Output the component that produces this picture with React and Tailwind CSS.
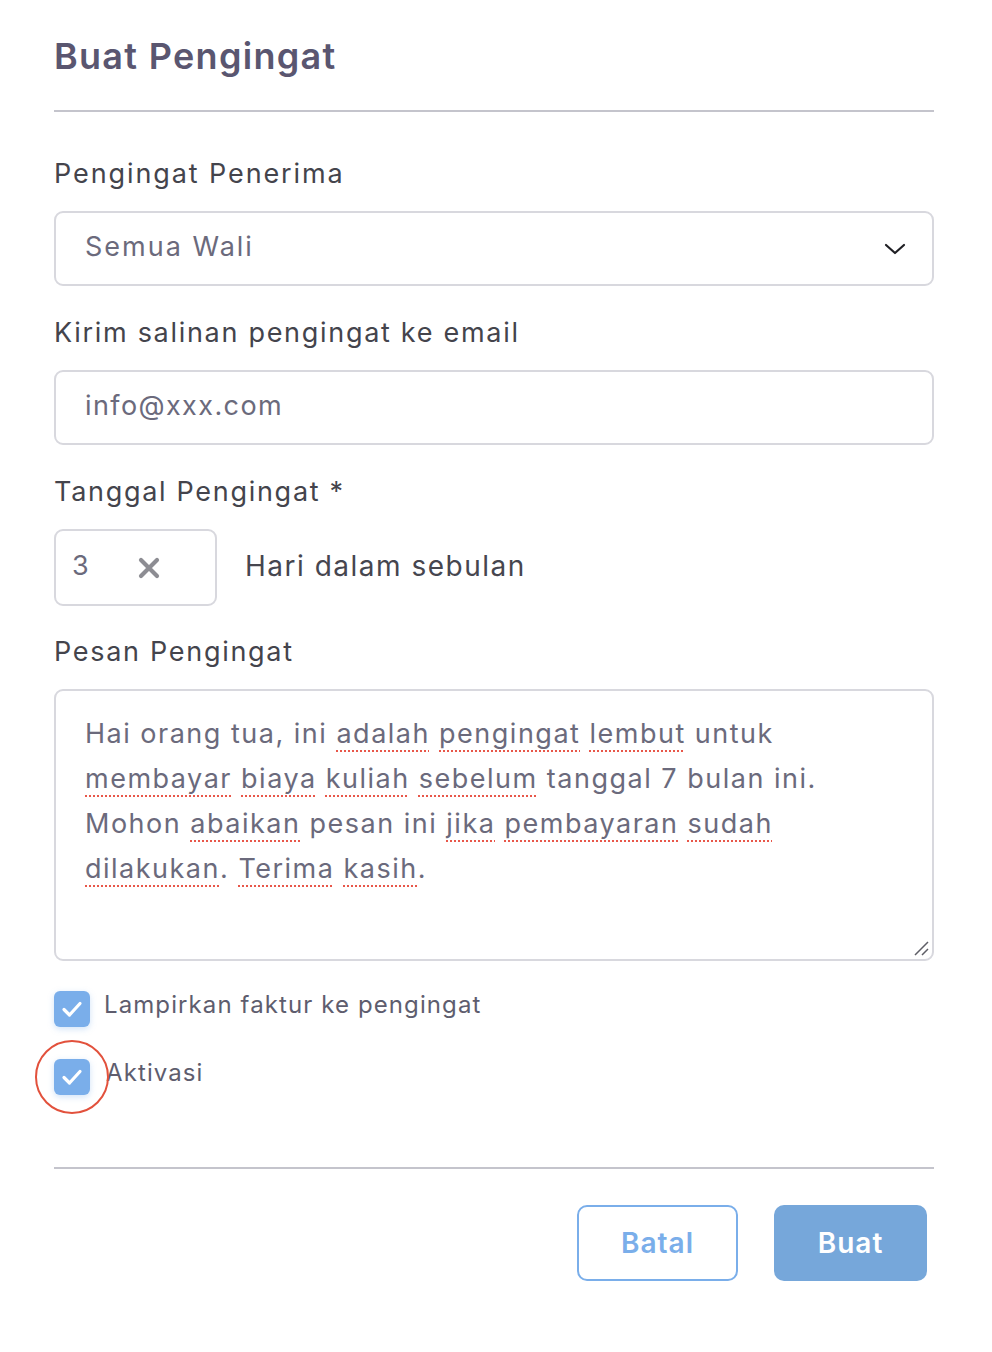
import React from "react";

const sp = "underline decoration-dotted decoration-[#e8574a] decoration-[2px] underline-offset-[7px]";

function Check() {
  return (
    <svg width="28" height="28" viewBox="0 0 28 28" fill="none" className="shrink-0">
      <path d="M6 14.5 L11.5 20 L22 8.5" stroke="white" strokeWidth="3.2" strokeLinecap="round" strokeLinejoin="round" />
    </svg>
  );
}

export default function App() {
  return (
    <div className="w-[992px] h-[1352px] bg-white font-['Inter',sans-serif] text-[#46464f]">
      <div className="px-[54px] pr-[58px]">
        <div className="pt-[30px] pb-[28px] text-[36px] font-semibold text-[#5a5670] tracking-[1.3px] leading-[52px]">
          Buat Pengingat
        </div>
        <div className="h-[2px] bg-[#c4c4cc]" />

        <div className="mt-[44px] text-[27px] tracking-[1.9px] leading-[36px] text-[#44444c]">Pengingat Penerima</div>
        <div className="mt-[19px] h-[75px] border-2 border-[#d8d8de] rounded-[9px] flex items-center justify-between pl-[29px] pr-[26px]">
          <span className="text-[27px] tracking-[2px] text-[#6b6a7c] -mt-[3px]">Semua Wali</span>
          <svg width="22" height="14" viewBox="0 0 22 14" fill="none">
            <path d="M2 3 L11 11 L20 3" stroke="#1f1f24" strokeWidth="2.2" strokeLinecap="round" strokeLinejoin="round" />
          </svg>
        </div>

        <div className="mt-[29px] text-[27px] tracking-[1.7px] leading-[36px] text-[#44444c]">Kirim salinan pengingat ke email</div>
        <div className="mt-[19px] h-[75px] border-2 border-[#d8d8de] rounded-[9px] flex items-center pl-[29px]">
          <span className="text-[27px] tracking-[1.4px] text-[#6b6a7c] -mt-[3px]">info@xxx.com</span>
        </div>

        <div className="mt-[29px] text-[27px] tracking-[1.7px] leading-[36px] text-[#44444c]">Tanggal Pengingat *</div>
        <div className="mt-[19px] flex items-center">
          <div className="w-[163px] h-[77px] border-2 border-[#d8d8de] rounded-[9px] flex items-center pl-[16px]">
            <span className="text-[27px] text-[#6b6a7c] w-[66px] -mt-[3px]">3</span>
            <svg width="22" height="22" viewBox="0 0 22 22" fill="none">
              <path d="M3 3 L19 19 M19 3 L3 19" stroke="#8d8d93" strokeWidth="4.2" strokeLinecap="round" />
            </svg>
          </div>
          <span className="ml-[28px] text-[28px] tracking-[1.5px] text-[#46464f] -mt-[3px]">Hari dalam sebulan</span>
        </div>

        <div className="mt-[28px] text-[27px] tracking-[1.7px] leading-[36px] text-[#44444c]">Pesan Pengingat</div>
        <div className="relative mt-[19px] h-[272px] border-2 border-[#d8d8de] rounded-[9px] pl-[29px] pr-[10px] pt-[20px]">
          <div className="text-[27px] tracking-[1.5px] leading-[45px] text-[#6b6a7c] whitespace-nowrap">
            Hai orang tua, ini <span className={sp}>adalah</span> <span className={sp}>pengingat</span> <span className={sp}>lembut</span> untuk
            <br />
            <span className={sp}>membayar</span> <span className={sp}>biaya</span> <span className={sp}>kuliah</span> <span className={sp}>sebelum</span> tanggal 7 bulan ini.
            <br />
            Mohon <span className={sp}>abaikan</span> pesan ini <span className={sp}>jika</span> <span className={sp}>pembayaran</span> <span className={sp}>sudah</span>
            <br />
            <span className={sp}>dilakukan</span>. <span className={sp}>Terima</span> <span className={sp}>kasih</span>.
          </div>
          <svg className="absolute right-[2px] bottom-[2px]" width="18" height="18" viewBox="0 0 18 18" fill="none">
            <path d="M3 16 L16 3 M10 16 L16 10" stroke="#5e5e66" strokeWidth="1.5" />
          </svg>
        </div>

        <div className="mt-[30px] flex items-center">
          <div className="w-[36px] h-[36px] rounded-[6px] bg-[#7aaeea] flex items-center justify-center shadow-[0_2px_6px_rgba(122,174,234,0.35)]">
            <Check />
          </div>
          <span className="ml-[14px] text-[24px] tracking-[1.1px] text-[#5e5d6e] -mt-[8px]">Lampirkan faktur ke pengingat</span>
        </div>

        <div className="mt-[32px] flex items-center relative">
          <div className="relative w-[36px] h-[36px] rounded-[6px] bg-[#7aaeea] flex items-center justify-center shadow-[0_2px_6px_rgba(122,174,234,0.35)]">
            <Check />
            <div className="absolute left-[-19px] top-[-19px] w-[74px] h-[74px] rounded-full border-2 border-[#e2513c]" />
          </div>
          <span className="ml-[16px] text-[24px] tracking-[1.1px] text-[#5e5d6e] -mt-[8px]">Aktivasi</span>
        </div>

        <div className="mt-[72px] h-[2px] bg-[#c4c4cc]" />

        <div className="mt-[36px] flex justify-end gap-[36px] pr-[7px]">
          <button className="w-[161px] h-[76px] rounded-[10px] border-2 border-[#7aaeea] bg-white text-[28px] tracking-[1px] font-semibold text-[#7aaeea]">
            Batal
          </button>
          <button className="w-[153px] h-[76px] rounded-[10px] bg-[#76a7da] text-[28px] tracking-[1px] font-semibold text-white">
            Buat
          </button>
        </div>
      </div>
    </div>
  );
}
